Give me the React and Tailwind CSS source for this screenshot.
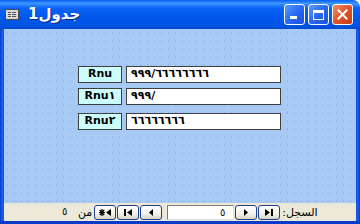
import React from 'react';

const arabicFont = "font-['DejaVu_Sans',sans-serif]";

function NavButton({ children }) {
  return (
    <div className="w-[22px] h-[15px] rounded-[3px] border border-[#1c3f94] bg-[linear-gradient(to_bottom,#ffffff,#f2f1ea_60%,#d8d5c6)] flex items-center justify-center">
      <svg width="14" height="9" viewBox="0 0 14 9" className="block">
        {children}
      </svg>
    </div>
  );
}

function FieldRow({ label, value, className = '' }) {
  return (
    <div className={`flex items-center gap-[4px] ${className}`}>
      <div
        className={`w-[44px] h-[17px] bg-[#ccfcfc] border border-[#3f3f3f] flex items-center justify-center text-[11px] font-bold text-black ${arabicFont}`}
      >
        {label}
      </div>
      <div
        dir="ltr"
        className={`w-[155px] h-[17px] bg-white border border-[#3f3f3f] flex items-center pl-[4px] text-[11px] font-bold text-black ${arabicFont}`}
      >
        {value}
      </div>
    </div>
  );
}

export default function App() {
  return (
    <div className="w-[360px] h-[224px] bg-white flex flex-col overflow-hidden select-none">
      {/* Title bar */}
      <div className="h-[29px] shrink-0 rounded-tr-[7px] bg-[linear-gradient(to_bottom,#0a5ff2_0%,#3c96ff_12%,#0a62f6_28%,#0058ec_60%,#0054e4_90%,#0347c8_100%)] flex items-center pl-[5px] pr-[7px]">
        <div className="w-[14px] h-[11px] border border-[#4a4a4a] bg-[#d8d8d8] flex flex-col justify-around px-[2px] py-[1px]">
          <div className="flex gap-[1px]"><div className="w-[3px] h-[1px] bg-[#555]" /><div className="flex-1 h-[1px] bg-[#555]" /></div>
          <div className="flex gap-[1px]"><div className="w-[3px] h-[1px] bg-[#555]" /><div className="flex-1 h-[1px] bg-[#555]" /></div>
          <div className="flex gap-[1px]"><div className="w-[3px] h-[1px] bg-[#555]" /><div className="flex-1 h-[1px] bg-[#555]" /></div>
        </div>
        <div
          dir="rtl"
          className={`ml-[9px] text-white text-[15px] font-bold [text-shadow:1px_1px_0_#0a2a8a] ${arabicFont}`}
        >
          جدول1
        </div>
        <div className="ml-auto flex items-center gap-[3px]">
          <div className="w-[21px] h-[21px] rounded-[3px] border border-white bg-[linear-gradient(135deg,#5a9bff,#2a6af2_50%,#1a50dc)] flex items-end pl-[5px] pb-[5px]">
            <div className="w-[7px] h-[3px] bg-white" />
          </div>
          <div className="w-[21px] h-[21px] rounded-[3px] border border-white bg-[linear-gradient(135deg,#5a9bff,#2a6af2_50%,#1a50dc)] flex items-center justify-center">
            <div className="w-[11px] h-[10px] border border-white border-t-[3px]" />
          </div>
          <div className="w-[21px] h-[21px] rounded-[3px] border border-white bg-[linear-gradient(135deg,#f0906a,#e0542c_50%,#c83a14)] flex items-center justify-center">
            <svg width="11" height="11" viewBox="0 0 11 11">
              <path d="M1.5 1.5 L9.5 9.5 M9.5 1.5 L1.5 9.5" stroke="white" strokeWidth="2" strokeLinecap="square" />
            </svg>
          </div>
        </div>
      </div>

      {/* Frame + body */}
      <div className="flex-1 flex bg-[#0848dc]">
        <div className="w-[4px] shrink-0 bg-[linear-gradient(to_right,#0a3bc8,#1b5ff0_60%,#0d4de0)]" />
        <div className="flex-1 flex flex-col">
          <div className="flex-1 bg-[#a6caf4] bg-[radial-gradient(circle,#93b4ec_0.5px,transparent_0.9px)] bg-[length:7px_8px] pt-[37px] pl-[74px]">
            <FieldRow label="Rnu" value="٩٩٩/٦٦٦٦٦٦٦٦" />
            <FieldRow label="Rnu١" value="٩٩٩/" className="mt-[5px]" />
            <FieldRow label="Rnu٢" value="٦٦٦٦٦٦٦٦" className="mt-[8px]" />
          </div>
          {/* Record navigation */}
          <div className="h-[18px] shrink-0 bg-[#ece9d8] flex items-center">
            <span className={`ml-[58px] w-[6px] text-[10px] text-black leading-none ${arabicFont}`}>٥</span>
            <span dir="rtl" className={`ml-[10px] text-[11px] text-black leading-none ${arabicFont}`}>من</span>
            <div className="ml-[2px] flex items-center gap-[1px]">
              <NavButton>
                <path d="M4 1 V8 M1 4.5 H7 M1.8 2 L6.2 7 M6.2 2 L1.8 7" stroke="black" strokeWidth="1.2" />
                <path d="M13 1 L8 4.5 L13 8 Z" fill="black" />
              </NavButton>
              <NavButton>
                <rect x="3" y="1" width="2" height="7" fill="black" />
                <path d="M11 1 L6 4.5 L11 8 Z" fill="black" />
              </NavButton>
              <NavButton>
                <path d="M9 1 L5 4.5 L9 8 Z" fill="black" />
              </NavButton>
            </div>
            <div
              dir="rtl"
              className={`ml-[5px] w-[67px] h-[15px] bg-white border border-t-[#7a7a7a] border-l-[#7a7a7a] border-r-[#e0e0e0] border-b-[#e0e0e0] flex items-center pr-[8px] text-[10px] text-black ${arabicFont}`}
            >
              ٥
            </div>
            <div className="ml-[1px] flex items-center gap-[1px]">
              <NavButton>
                <path d="M5 1 L9 4.5 L5 8 Z" fill="black" />
              </NavButton>
              <NavButton>
                <path d="M3 1 L8 4.5 L3 8 Z" fill="black" />
                <rect x="9" y="1" width="2" height="7" fill="black" />
              </NavButton>
            </div>
            <span dir="rtl" className={`ml-[2px] text-[11px] text-black leading-none ${arabicFont}`}>السجل:</span>
          </div>
        </div>
        <div className="w-[4px] shrink-0 bg-[linear-gradient(to_right,#0d4de0,#1b5ff0_40%,#0a3bc8)]" />
      </div>
      <div className="h-[3px] shrink-0 bg-[#0a3bc8]" />
    </div>
  );
}
